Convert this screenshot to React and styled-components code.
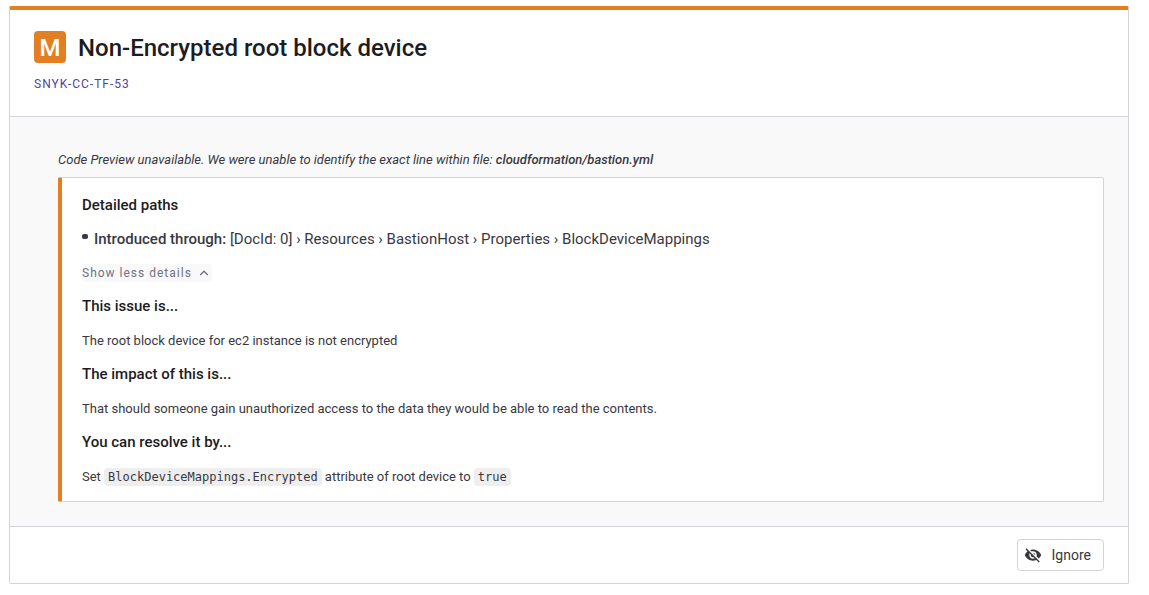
import React from "react";
import styled, { createGlobalStyle } from "styled-components";

const GlobalStyle = createGlobalStyle`
  * { box-sizing: border-box; }
  body {
    margin: 0;
    background: #fff;
    color: #393842;
    font-family: Roboto, "Liberation Sans", sans-serif;
    font-size: 13px;
    line-height: 20px;
  }
`;

const Card = styled.article`
  margin: 6px 20px 11px 9px;
  border: 1px solid #d3d3d9;
  border-top: 4px solid #e27f22;
  border-radius: 2px;
  background: #fff;
`;

const CardHeader = styled.header`
  padding: 21px 24px 22px;
  border-bottom: 1px solid #d3d3d9;
`;

const TitleRow = styled.div`
  display: flex;
  align-items: flex-start;
  gap: 12px;
  margin-bottom: 9px;
`;

const SeverityBadge = styled.span`
  width: 32px;
  height: 32px;
  border-radius: 4px;
  background: #e27f22;
  color: #fff;
  font-size: 24px;
  font-weight: 500;
  line-height: 34px;
  text-align: center;
`;

const Title = styled.h1`
  margin: 0;
  color: #1c1c21;
  font-size: 24px;
  font-weight: 500;
  line-height: 34px;
`;

const IssueId = styled.a`
  display: block;
  width: fit-content;
  color: #4b45a1;
  font-size: 12px;
  letter-spacing: 1px;
  text-decoration: none;
`;

const CardBody = styled.div`
  padding: 33px 24px 24px 48px;
  background: #f9f9f9;
`;

const Notice = styled.p`
  margin: 0 0 7px;
  font-style: italic;
`;

const Strong = styled.strong`
  font-weight: 500;
`;

const Panel = styled.section`
  padding: 17px 20px 14px;
  border: 1px solid #d3d3d3;
  border-left: 4px solid #e27f22;
  border-radius: 2px;
  background: #fff;
`;

const Heading = styled.h2`
  margin: 0 0 15px;
  color: #1c1c21;
  font-size: 15px;
  font-weight: 500;
  line-height: 20px;
`;

const PathList = styled.ul`
  margin: 0 0 16px;
  padding: 0;
  list-style: none;
  font-size: 15px;
  line-height: 18px;
`;

const PathItem = styled.li`
  display: flex;
  gap: 6px;

  &::before {
    content: "";
    flex: none;
    width: 6px;
    height: 5px;
    margin-top: 4px;
    border-radius: 2px;
    background: #393842;
  }
`;

const Toggle = styled.button`
  display: flex;
  align-items: center;
  gap: 7px;
  height: 18px;
  margin: 0 0 14px;
  padding: 0 3px 0 0;
  border: 0;
  border-radius: 4px;
  background: #f9f9f9;
  color: #727184;
  font: 12px/18px Roboto, "Liberation Sans", sans-serif;
  letter-spacing: 1px;
  cursor: pointer;
`;

const Text = styled.p`
  margin: 0 0 13px;

  &:last-child {
    margin-bottom: 0;
  }
`;

const Code = styled.code`
  padding: 2px 4px;
  border-radius: 4px;
  background: #eee;
  font-family: "DejaVu Sans Mono", "Liberation Mono", monospace;
  font-size: 12px;
`;

const CardFooter = styled.footer`
  display: flex;
  justify-content: flex-end;
  padding: 12px 24px;
  border-top: 1px solid #d3d3d9;
`;

const IgnoreButton = styled.button`
  display: flex;
  align-items: center;
  gap: 10px;
  height: 32px;
  padding: 0 12px 0 6px;
  border: 1px solid #d3d3d9;
  border-radius: 4px;
  background: #fff;
  color: #393842;
  font: 14px/20px Roboto, "Liberation Sans", sans-serif;
  cursor: pointer;
`;

const ChevronUp = () => (
  <svg width="10" height="10" viewBox="0 0 10 10" fill="none" stroke="currentColor" strokeWidth="1.3" aria-hidden="true">
    <path d="M1.2 7 5 3.2 8.8 7" />
  </svg>
);

const EyeOff = () => (
  <svg width="18" height="18" viewBox="0 0 24 24" fill="currentColor" aria-hidden="true">
    <path d="M12 7c2.76 0 5 2.24 5 5 0 .65-.13 1.26-.36 1.83l2.92 2.92c1.51-1.26 2.7-2.89 3.43-4.75-1.73-4.39-6-7.5-11-7.5-1.4 0-2.74.25-3.98.7l2.16 2.16C10.74 7.13 11.35 7 12 7zM2 4.27l2.28 2.28.46.46A11.804 11.804 0 0 0 1 12c1.73 4.39 6 7.5 11 7.5 1.55 0 3.03-.3 4.38-.84l.42.42L19.73 22 21 20.73 3.27 3 2 4.27zM7.53 9.8l1.55 1.55c-.05.21-.08.43-.08.65 0 1.66 1.34 3 3 3 .22 0 .44-.03.65-.08l1.55 1.55c-.67.33-1.41.53-2.2.53-2.76 0-5-2.24-5-5 0-.79.2-1.53.53-2.2zm4.31-.78 3.15 3.15.02-.16c0-1.66-1.34-3-3-3l-.17.01z" />
  </svg>
);

const path = ["[DocId: 0]", "Resources", "BastionHost", "Properties", "BlockDeviceMappings"];

export default function App() {
  return (
    <>
      <GlobalStyle />
      <Card>
        <CardHeader>
          <TitleRow>
            <SeverityBadge>M</SeverityBadge>
            <Title>Non-Encrypted root block device</Title>
          </TitleRow>
          <IssueId href="#SNYK-CC-TF-53">SNYK-CC-TF-53</IssueId>
        </CardHeader>
        <CardBody>
          <Notice>
            Code Preview unavailable. We were unable to identify the exact line within file:{" "}
            <Strong>cloudformation/bastion.yml</Strong>
          </Notice>
          <Panel>
            <Heading>Detailed paths</Heading>
            <PathList>
              <PathItem>
                <span>
                  <Strong>Introduced through:</Strong> {path.join(" › ")}
                </span>
              </PathItem>
            </PathList>
            <Toggle type="button" aria-expanded="true">
              Show less details
              <ChevronUp />
            </Toggle>
            <Heading>This issue is...</Heading>
            <Text>The root block device for ec2 instance is not encrypted</Text>
            <Heading>The impact of this is...</Heading>
            <Text>
              That should someone gain unauthorized access to the data they would be able to read the contents.
            </Text>
            <Heading>You can resolve it by...</Heading>
            <Text>
              Set <Code>BlockDeviceMappings.Encrypted</Code> attribute of root device to <Code>true</Code>
            </Text>
          </Panel>
        </CardBody>
        <CardFooter>
          <IgnoreButton type="button">
            <EyeOff />
            Ignore
          </IgnoreButton>
        </CardFooter>
      </Card>
    </>
  );
}
